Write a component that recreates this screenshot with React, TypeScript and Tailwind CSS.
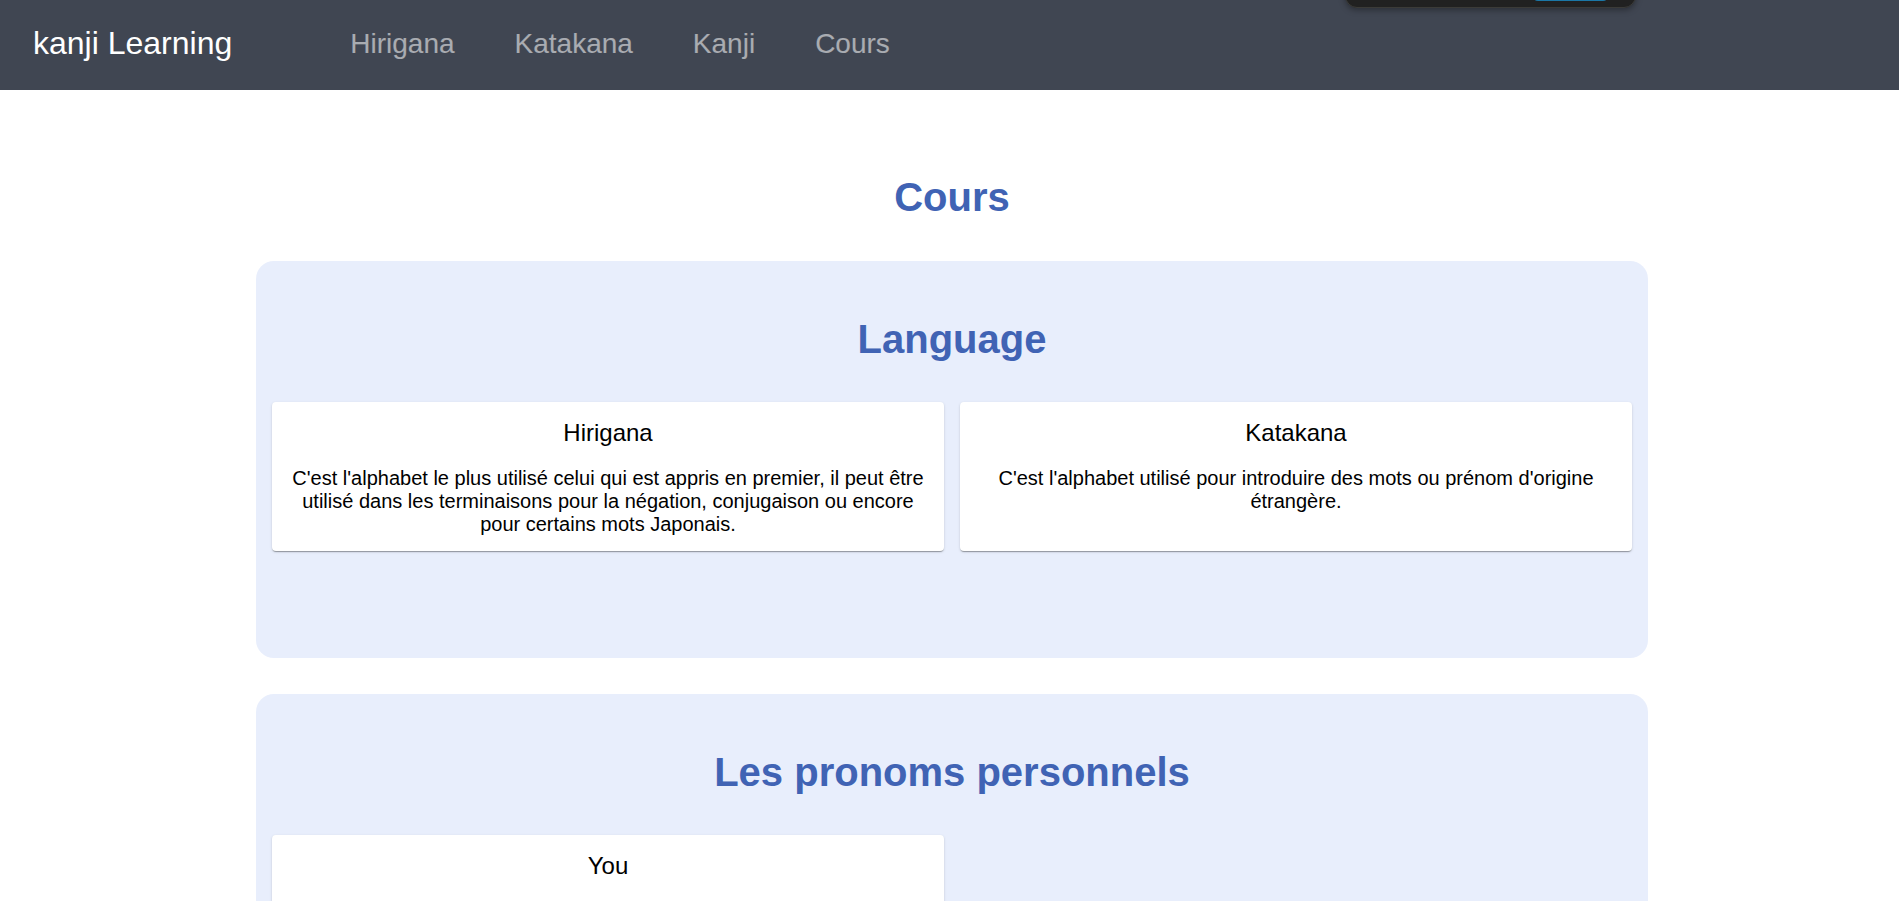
import React from "react";

interface Lesson {
  title: string;
  text?: string;
}

interface Section {
  title: string;
  lessons: Lesson[];
}

const links = ["Hirigana", "Katakana", "Kanji", "Cours"];

const sections: Section[] = [
  {
    title: "Language",
    lessons: [
      {
        title: "Hirigana",
        text: "C'est l'alphabet le plus utilisé celui qui est appris en premier, il peut être utilisé dans les terminaisons pour la négation, conjugaison ou encore pour certains mots Japonais.",
      },
      {
        title: "Katakana",
        text: "C'est l'alphabet utilisé pour introduire des mots ou prénom d'origine étrangère.",
      },
    ],
  },
  {
    title: "Les pronoms personnels",
    lessons: [{ title: "You" }],
  },
];

function LessonCard({ lesson }: { lesson: Lesson }) {
  return (
    <div className="bg-white rounded-[4px] px-4 pt-[17px] pb-[15px] min-h-[149px] text-center text-black shadow-[0_2px_1px_-1px_rgba(0,0,0,0.2),0_1px_1px_0_rgba(0,0,0,0.14),0_1px_3px_0_rgba(0,0,0,0.12)]">
      <h3 className="text-[24px] leading-[28px] mb-5">{lesson.title}</h3>
      {lesson.text && <p className="text-[20px] leading-[23px]">{lesson.text}</p>}
    </div>
  );
}

export default function App() {
  return (
    <div className="relative min-h-screen bg-white font-['Liberation_Sans',Arial,sans-serif]">
      {/* Navbar */}
      <nav className="h-[90px] bg-[#404652] flex items-center pl-[33px]">
        <span className="text-white text-[32px] leading-none pb-[5px]">kanji Learning</span>
        <div className="flex ml-[88px] pb-[3px]">
          {links.map((link) => (
            <a
              key={link}
              href="#"
              className="px-[30px] text-[28px] leading-none text-white/55 hover:text-white/75"
            >
              {link}
            </a>
          ))}
        </div>
      </nav>

      {/* floating popup cut at the top of the window */}
      <div className="absolute left-[1345px] top-[-40px] w-[291px] h-[48px] bg-[#212121] border border-[#3b3b38] rounded-[12px] shadow-[0_2px_6px_rgba(0,0,0,0.35)]">
        <div className="absolute left-[186px] bottom-[6px] w-[77px] h-[24px] rounded-[6px] border-2 border-[#1b77a6]" />
      </div>

      {/* Content */}
      <main className="pt-[84px] pb-10 pl-[5px]">
        <h1 className="text-center text-[40px] leading-[46px] font-bold text-[#4063b4] mb-[41px]">
          Cours
        </h1>

        <div className="flex flex-col gap-[36px]">
          {sections.map((section) => (
            <section
              key={section.title}
              className="w-[1392px] mx-auto rounded-[18px] bg-[#e8eefc] px-4 pt-[55px] pb-[107px]"
            >
              <h2 className="text-center text-[40px] leading-[46px] font-bold text-[#4063b4] mb-10">
                {section.title}
              </h2>
              <div className="grid grid-cols-2 gap-4">
                {section.lessons.map((lesson) => (
                  <LessonCard key={lesson.title} lesson={lesson} />
                ))}
              </div>
            </section>
          ))}
        </div>
      </main>
    </div>
  );
}
